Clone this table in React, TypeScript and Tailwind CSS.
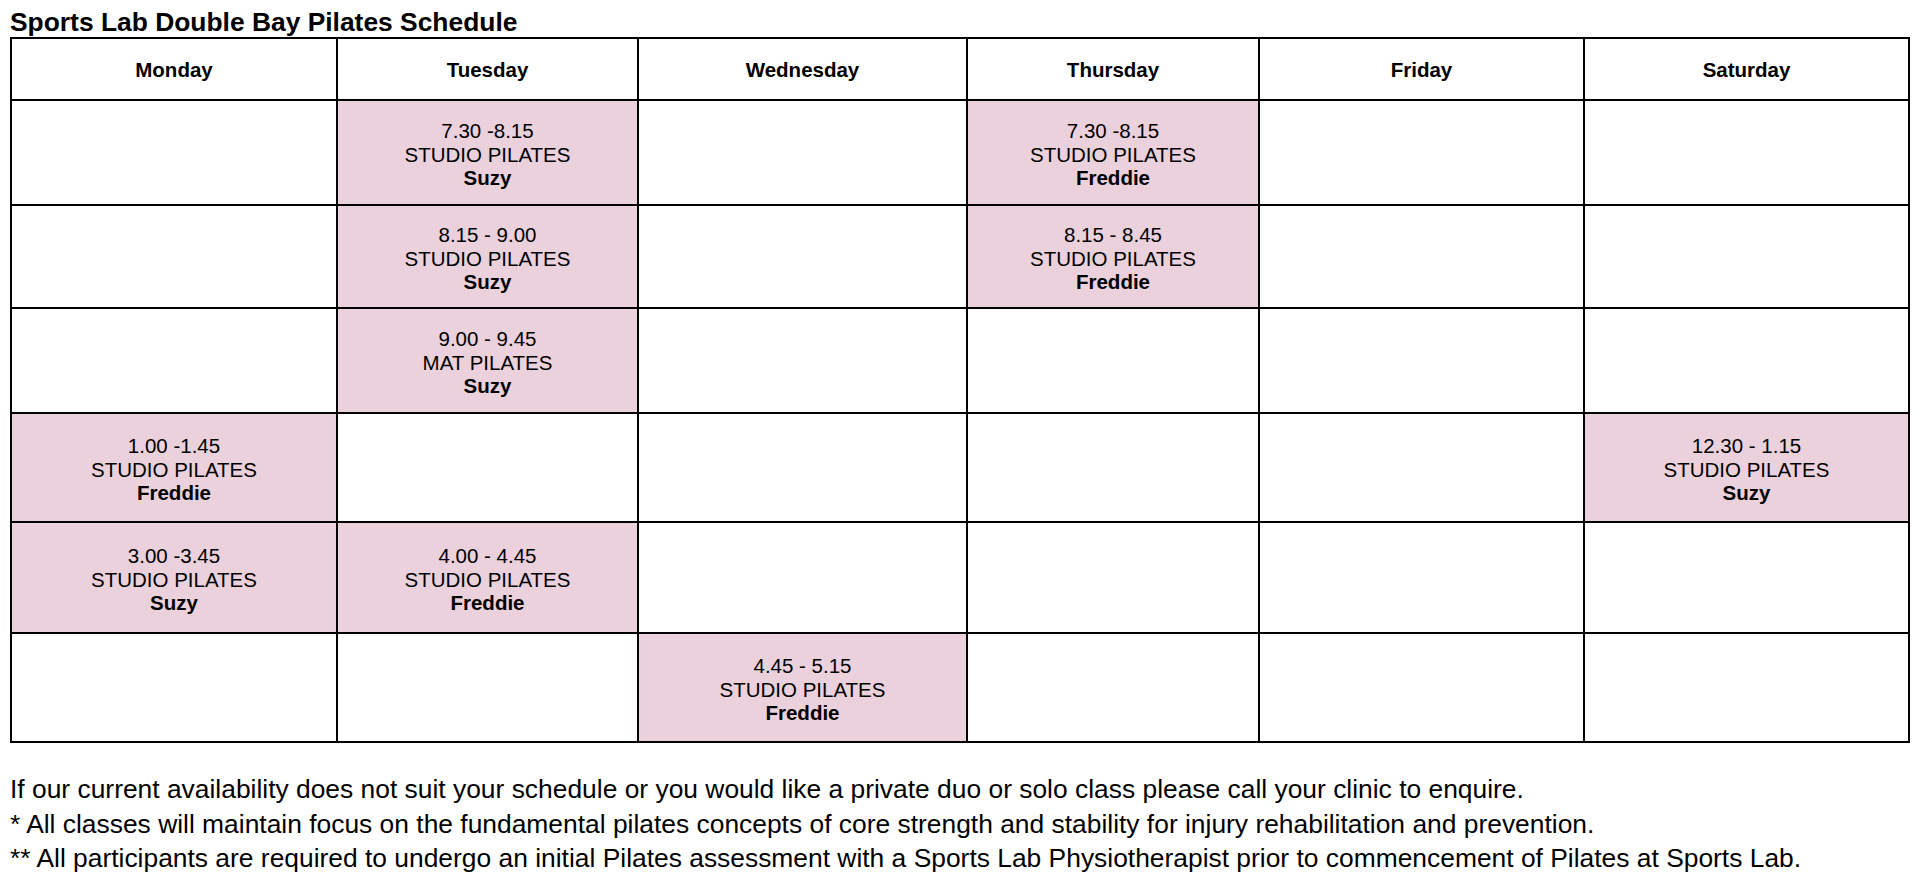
import React from 'react';

type Slot = { time: string; name: string; who: string } | null;

const days = ['Monday', 'Tuesday', 'Wednesday', 'Thursday', 'Friday', 'Saturday'];

const studio = (time: string, who: string): Slot => ({ time, name: 'STUDIO PILATES', who });

// one entry per row, one slot per day
const rows: Slot[][] = [
	[null, studio('7.30 -8.15', 'Suzy'), null, studio('7.30 -8.15', 'Freddie'), null, null],
	[null, studio('8.15 - 9.00', 'Suzy'), null, studio('8.15 - 8.45', 'Freddie'), null, null],
	[null, { time: '9.00 - 9.45', name: 'MAT PILATES', who: 'Suzy' }, null, null, null, null],
	[studio('1.00 -1.45', 'Freddie'), null, null, null, null, studio('12.30 - 1.15', 'Suzy')],
	[studio('3.00 -3.45', 'Suzy'), studio('4.00 - 4.45', 'Freddie'), null, null, null, null],
	[null, null, studio('4.45 - 5.15', 'Freddie'), null, null, null],
];

const notes = [
	'If our current availability does not suit your schedule or you would like a private duo or solo class please call your clinic to enquire.',
	'* All classes will maintain focus on the fundamental pilates concepts of core strength and stability for injury rehabilitation and prevention.',
	'** All participants are required to undergo an initial Pilates assessment with a Sports Lab Physiotherapist prior to commencement of Pilates at Sports Lab.',
];

const App: React.FC = () => {
	return (
		<div className="min-h-[893px] bg-white pt-[7px] text-black font-['Liberation_Sans',Arial,sans-serif]">
			<h1 className="pl-[10px] text-[26.4px] font-bold leading-[30px]">Sports Lab Double Bay Pilates Schedule</h1>

			{/* Schedule grid */}
			<div className="ml-[10px] grid w-[1900px] grid-cols-[324px_299px_327px_290px_323px_323px] grid-rows-[60px_103px_101px_103px_107px_109px_107px] gap-[2px] bg-black p-[2px]">
				{days.map((day) => (
					<div key={day} className="flex items-center justify-center bg-white pt-[2px] text-[20.5px] font-bold">
						{day}
					</div>
				))}

				{rows.map((row, rowIndex) =>
					row.map((slot, index) =>
						slot ? (
							<div
								key={`${rowIndex}-${index}`}
								className="flex flex-col items-center justify-center bg-[#ead1dc] pt-[4px] text-center text-[20.5px] leading-[23.5px]"
							>
								<div>{slot.time}</div>
								<div>{slot.name}</div>
								<div className="font-bold">{slot.who}</div>
							</div>
						) : (
							<div key={`${rowIndex}-${index}`} className="bg-white" />
						)
					)
				)}
			</div>

			{/* Notes */}
			<div className="mt-[29px] pl-[10px] text-[26.4px] leading-[34.5px]">
				{notes.map((note, index) => (
					<p key={index}>{note}</p>
				))}
			</div>
		</div>
	);
};

export default App;
